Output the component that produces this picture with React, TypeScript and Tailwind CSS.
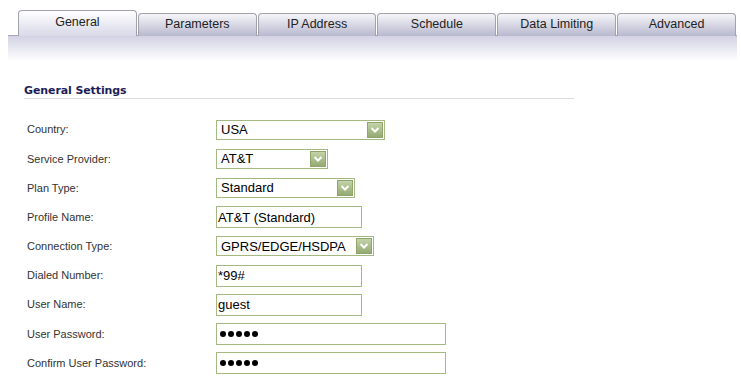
import React from "react";

const tabs = ["General", "Parameters", "IP Address", "Schedule", "Data Limiting", "Advanced"];

type Row = {
  label: string;
  kind: "select" | "text" | "password";
  value: string;
  width: string;
};

const rows: Row[] = [
  { label: "Country:", kind: "select", value: "USA", width: "w-[169px]" },
  { label: "Service Provider:", kind: "select", value: "AT&T", width: "w-[112px]" },
  { label: "Plan Type:", kind: "select", value: "Standard", width: "w-[139px]" },
  { label: "Profile Name:", kind: "text", value: "AT&T (Standard)", width: "w-[146px]" },
  { label: "Connection Type:", kind: "select", value: "GPRS/EDGE/HSDPA", width: "w-[158px]" },
  { label: "Dialed Number:", kind: "text", value: "*99#", width: "w-[146px]" },
  { label: "User Name:", kind: "text", value: "guest", width: "w-[146px]" },
  { label: "User Password:", kind: "password", value: "", width: "w-[230px]" },
  { label: "Confirm User Password:", kind: "password", value: "", width: "w-[230px]" },
];

function ArrowButton() {
  return (
    <div className="w-[16px] h-[16px] mr-[1px] border border-[#8fa56c] bg-gradient-to-b from-[#c3d3a8] to-[#94ab72] flex items-center justify-center">
      <svg width="10" height="8" viewBox="0 0 10 8">
        <path d="M1.5 2 L5 5.5 L8.5 2" fill="none" stroke="#fff" strokeWidth="2" />
      </svg>
    </div>
  );
}

function Control({ row }: { row: Row }) {
  if (row.kind === "select") {
    return (
      <div className={`${row.width} h-[20px] border border-[#a4b982] bg-white flex items-center justify-between`}>
        <span className="pl-[4px] text-[13px] text-black leading-none">{row.value}</span>
        <ArrowButton />
      </div>
    );
  }
  if (row.kind === "password") {
    return (
      <div className={`${row.width} h-[22px] border border-[#a4b982] bg-white flex items-center gap-[2px] pl-[3px]`}>
        {[0, 1, 2, 3, 4].map((i) => (
          <div key={i} className="w-[6px] h-[6px] rounded-full bg-black" />
        ))}
      </div>
    );
  }
  return (
    <div className={`${row.width} h-[22px] border border-[#a4b982] bg-white flex items-center pl-[1px]`}>
      <span className="text-[13px] text-black leading-none">{row.value}</span>
    </div>
  );
}

export default function App() {
  return (
    <div className="w-[741px] h-[383px] bg-white overflow-hidden font-['Liberation_Sans',Arial,sans-serif]">
      {/* tab strip */}
      <div className="ml-[8px] w-[729px] pt-[10px]">
        <div className="flex items-end pl-[10px] h-[26px] relative z-10 -mb-px">
          {tabs.map((t, i) =>
            i === 0 ? (
              <div
                key={t}
                className="w-[119px] mr-px h-[26px] border border-b-0 border-[#a2a2ae] rounded-t-[4px] bg-gradient-to-b from-white to-[#d8d8e8] flex items-center justify-center text-[12.5px] text-[#222] pb-[3px]"
              >
                {t}
              </div>
            ) : (
              <div
                key={t}
                className="w-[119px] mr-px h-[23px] border border-b-0 border-[#a2a2ae] rounded-t-[4px] bg-gradient-to-b from-[#f6f6f9] to-[#b8b8cf] flex items-center justify-center text-[12.5px] text-[#222] pb-px"
              >
                {t}
              </div>
            )
          )}
        </div>
        <div className="h-[26px] border-t border-[#a6a6b6] bg-gradient-to-b from-[#d2d2e4] to-white" />
      </div>

      {/* settings */}
      <div className="pl-[24px] pt-[23px]">
        <div className="w-[550px] border-b border-[#dcdcdc] pb-px">
          <h2 className="font-['DejaVu_Sans',Verdana,sans-serif] font-bold text-[11px] leading-[13px] text-[#1d1d58] tracking-[-0.1px]">
            General Settings
          </h2>
        </div>
        <div className="pt-[16px]">
          {rows.map((row) => (
            <div key={row.label} className="flex items-center h-[29.2px]">
              <div className="w-[192px] pl-[3px] text-[11px] text-[#333]">{row.label}</div>
              <Control row={row} />
            </div>
          ))}
        </div>
      </div>
    </div>
  );
}
